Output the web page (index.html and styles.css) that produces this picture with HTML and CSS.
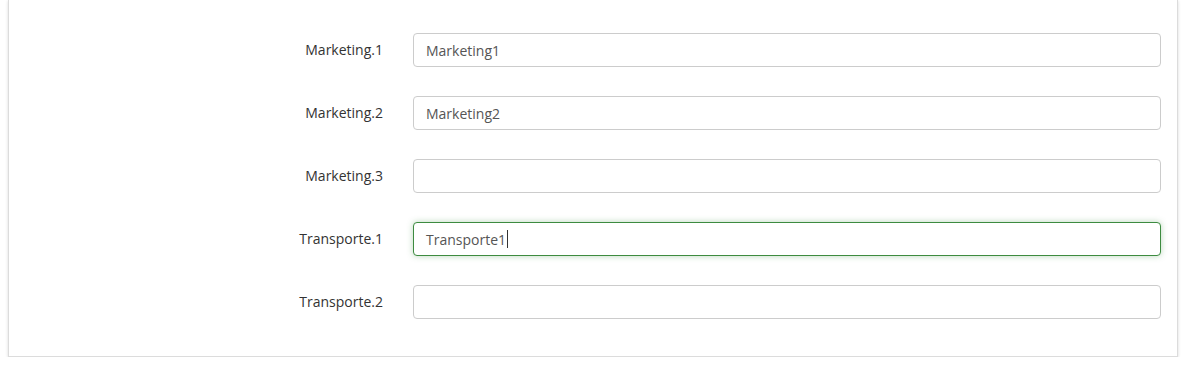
FILE: index.html
```html
<!DOCTYPE html>
<html lang="pt">

<head>
    <meta charset="UTF-8">
    <meta name="viewport" content="width=device-width, initial-scale=1.0">
    <title>Departamentos</title>
    <link rel="stylesheet" href="styles.css">
</head>

<body>
    <div class="panel">
        <form class="form-horizontal">
            <div class="form-row">
                <label for="mkt1">Marketing.1</label>
                <input type="text" id="mkt1" class="field" value="Marketing1">
            </div>
            <div class="form-row">
                <label for="mkt2">Marketing.2</label>
                <input type="text" id="mkt2" class="field" value="Marketing2">
            </div>
            <div class="form-row">
                <label for="mkt3">Marketing.3</label>
                <input type="text" id="mkt3" class="field" value="">
            </div>
            <div class="form-row">
                <label>Transporte.1</label>
                <!-- focused field, drawn with its caret -->
                <div class="field field-focus">Transporte1<span class="caret"></span></div>
            </div>
            <div class="form-row">
                <label for="trp2">Transporte.2</label>
                <input type="text" id="trp2" class="field" value="">
            </div>
        </form>
    </div>
</body>

</html>
```

FILE: styles.css
```css
body {
    margin: 0;
    padding: 0 10px 0 8px;
    font-family: "Open Sans", Arial, sans-serif;
    font-size: 14px;
    background: #fff;
}

.panel {
    border: 1px solid #dcdcdc;
    border-top: none;
    box-shadow: 0 1px 3px rgba(0, 0, 0, 0.15);
    padding: 33px 16px 37px 0;
}

.form-horizontal {
    display: flex;
    flex-direction: column;
    gap: 29px;
}

.form-row {
    display: flex;
    align-items: center;
    gap: 30px;
}

.form-row label {
    width: 374px;
    flex-shrink: 0;
    text-align: right;
    color: #333;
    margin-top: -1px;
}

.field {
    flex: 1;
    box-sizing: border-box;
    height: 34px;
    padding: 0 12px;
    border: 1px solid #ccc;
    border-radius: 4px;
    font-family: inherit;
    font-size: 14px;
    color: #555;
    background: #fff;
    outline: none;
}

.field-focus {
    display: flex;
    align-items: center;
    border-color: #3d8b40;
    box-shadow: 0 0 6px rgba(61, 139, 64, 0.35);
}

.caret {
    display: inline-block;
    width: 1px;
    height: 18px;
    margin-left: 1px;
    background: #333;
}
```
